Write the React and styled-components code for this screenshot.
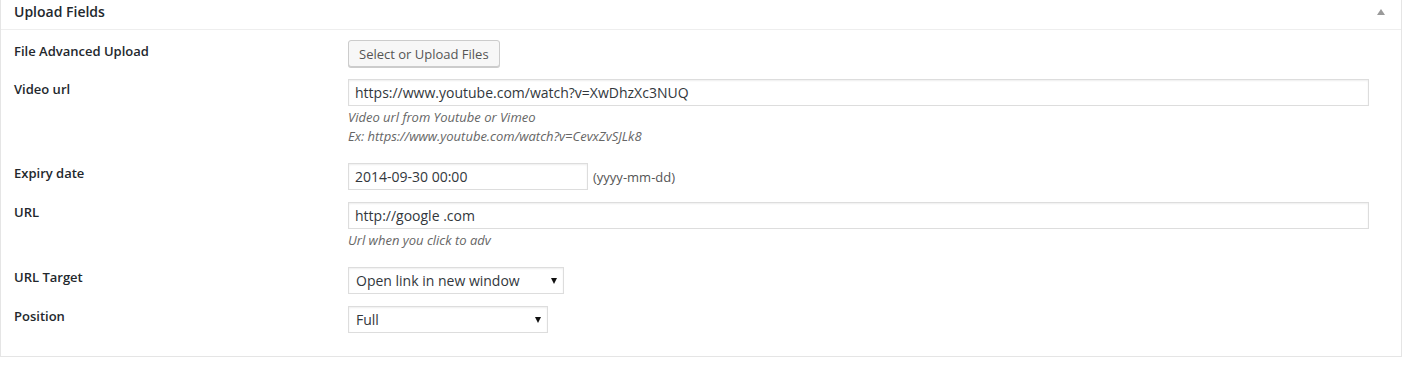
import React from "react";
import styled, { createGlobalStyle } from "styled-components";

const Global = createGlobalStyle`
  html, body { margin: 0; padding: 0; background: #fff; }
  body { font-family: "Open Sans", "Noto Sans", sans-serif; color: #23282d; }
  * { box-sizing: border-box; }
`;

const Panel = styled.section`
  width: 1402px;
  background: #fff;
  border: 1px solid #e5e5e5;
  border-top: none;
`;

const Header = styled.header`
  height: 30px;
  display: flex;
  align-items: flex-start;
  justify-content: space-between;
  padding: 3px 16px 0 13px;
  border-bottom: 1px solid #eee;
`;

const Title = styled.h2`
  margin: 0;
  font-size: 14px;
  line-height: 18px;
  font-weight: 600;
  color: #23282d;
`;

const Toggle = styled.span`
  margin-top: 6px;
  width: 0;
  height: 0;
  border-left: 4px solid transparent;
  border-right: 4px solid transparent;
  border-bottom: 6px solid #9a9a9a;
`;

const Body = styled.div`
  padding: 4px 32px 17px 13px;
`;

const Row = styled.div`
  display: grid;
  grid-template-columns: 334px 1fr;
  padding: 6px 0;
`;

const Label = styled.label`
  font-size: 13px;
  line-height: 20px;
  font-weight: 600;
  color: #23282d;
  padding-top: ${(p) => p.$top || 0}px;
`;

const Control = styled.div`
  display: flex;
  flex-direction: column;
  align-items: flex-start;
`;

const Inline = styled.div`
  display: flex;
  align-items: center;
  gap: 5px;
`;

const Button = styled.button`
  height: 27px;
  padding: 0 10px;
  font-family: inherit;
  font-size: 13px;
  color: #555;
  background: #f7f7f7;
  border: 1px solid #ccc;
  border-radius: 3px;
  box-shadow: 0 1px 0 #ccc;
  cursor: pointer;
`;

const Input = styled.input`
  height: 27px;
  width: ${(p) => (p.$width ? `${p.$width}px` : "100%")};
  padding: 0 6px;
  font-family: inherit;
  font-size: 14px;
  color: #32373c;
  background: #fff;
  border: 1px solid #ddd;
  box-shadow: inset 0 1px 2px rgba(0, 0, 0, 0.07);
  outline: none;
`;

const Hint = styled.span`
  font-size: 13px;
  color: #555;
`;

const Description = styled.p`
  margin: 2px 0 5px;
  font-size: 13px;
  line-height: 19px;
  font-style: italic;
  color: #666;
`;

const SelectWrap = styled.div`
  position: relative;
  width: ${(p) => p.$width}px;
  &::after {
    content: "";
    position: absolute;
    right: 7px;
    top: 11px;
    border-left: 3.5px solid transparent;
    border-right: 3.5px solid transparent;
    border-top: 6px solid #111;
    pointer-events: none;
  }
`;

const Select = styled.select`
  appearance: none;
  -webkit-appearance: none;
  width: 100%;
  height: 27px;
  padding: 0 20px 0 7px;
  font-family: inherit;
  font-size: 14px;
  color: #32373c;
  background: #fff;
  border: 1px solid #ddd;
  border-radius: 0;
  box-shadow: inset 0 1px 2px rgba(0, 0, 0, 0.07);
  outline: none;
`;

export default function App() {
  return (
    <>
      <Global />
      <Panel>
        <Header>
          <Title>Upload Fields</Title>
          <Toggle />
        </Header>
        <Body>
          <Row>
            <Label $top={1}>File Advanced Upload</Label>
            <Control>
              <Button type="button">Select or Upload Files</Button>
            </Control>
          </Row>
          <Row>
            <Label>Video url</Label>
            <Control>
              <Input defaultValue="https://www.youtube.com/watch?v=XwDhzXc3NUQ" />
              <Description>
                Video url from Youtube or Vimeo
                <br />
                Ex: https://www.youtube.com/watch?v=CevxZvSJLk8
              </Description>
            </Control>
          </Row>
          <Row>
            <Label>Expiry date</Label>
            <Control>
              <Inline>
                <Input $width={240} defaultValue="2014-09-30 00:00" />
                <Hint>(yyyy-mm-dd)</Hint>
              </Inline>
            </Control>
          </Row>
          <Row>
            <Label>URL</Label>
            <Control>
              <Input defaultValue="http://google .com" />
              <Description>Url when you click to adv</Description>
            </Control>
          </Row>
          <Row>
            <Label>URL Target</Label>
            <Control>
              <SelectWrap $width={216}>
                <Select defaultValue="_blank">
                  <option value="_blank">Open link in new window</option>
                  <option value="_self">Open link in same window</option>
                </Select>
              </SelectWrap>
            </Control>
          </Row>
          <Row>
            <Label>Position</Label>
            <Control>
              <SelectWrap $width={200}>
                <Select defaultValue="full">
                  <option value="full">Full</option>
                  <option value="left">Left</option>
                  <option value="right">Right</option>
                </Select>
              </SelectWrap>
            </Control>
          </Row>
        </Body>
      </Panel>
    </>
  );
}
